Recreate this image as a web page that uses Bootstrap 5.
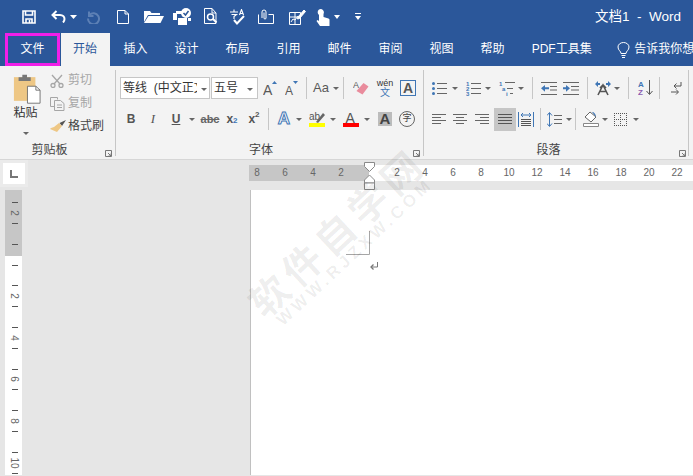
<!DOCTYPE html>
<html lang="zh">
<head>
<meta charset="utf-8">
<title>文档1 - Word</title>
<link rel="stylesheet" href="https://cdn.jsdelivr.net/npm/bootstrap@5.3.0/dist/css/bootstrap.min.css">
<style>
    html, body { margin: 0; height: 476px; overflow: hidden; }
    body { font-family: "Liberation Sans", "Noto Sans CJK SC", sans-serif; font-size: 12px; color: #444; }
    svg { display: block; flex: none; }

    .app { position: relative; width: 693px; height: 476px; overflow: hidden; background: #e6e6e6; }

    .title-bar { height: 33px; background: #2b579a; color: #fff; padding-left: 22px; }
    .qa { width: 14px; margin-right: 15px; }
    .doc-title { margin-left: auto; margin-right: 12px; font-size: 13.5px; line-height: 30px; white-space: pre; }
    .tab-bar { height: 33px; background: #2b579a; color: #fff; padding-left: 5px; white-space: nowrap; }
    .rtab { height: 33px; line-height: 33px; padding: 0 13.5px; flex: none; }
    .rtab-file { width: 55px; margin-right: 1px; padding: 0; text-align: center; line-height: 27px; border: 3px solid #f01fe8; }
    .rtab-on { background: #f3f3f3; color: #2b579a; width: 49px; padding-left: 12px; padding-right: 0; }
    .tell { padding-left: 12px; }

    .ribbon { height: 94px; background: #f3f3f3; border-bottom: 1px solid #d6d6d6; }
    .rgroup { position: relative; height: 94px; flex: none; }
    .rgroup::after { content: ""; position: absolute; right: 0; top: 4px; bottom: 4px; width: 1px; background: #c6c6c6; }
    .rbody { height: 75px; padding-top: 11px; }
    .rrow { height: 22px; margin-bottom: 9px; }
    .rlabel { height: 19px; line-height: 19px; text-align: center; color: #444; }
    .launch { position: absolute; right: 4px; bottom: 3px; }

    .paste { width: 50px; padding-left: 13px; }
    .paste-text { color: #333; line-height: 17px; width: 25px; text-align: center; margin-top: 1px; }
    .clip-item { height: 23px; line-height: 23px; width: 60px; color: #a6a6a6; }
    .clip-item.on { color: #444; }
    .clip-ic { width: 18px; }

    .combo { height: 22px; line-height: 20px; background: #fff; border: 1px solid #c6c6c6; color: #333; flex: none; padding-left: 2px; }
    .combo-font { width: 90px; margin-right: 1px; }
    .combo-size { width: 47px; }
    .combo-text { overflow: hidden; white-space: nowrap; flex: 1; }
    .combo-font .combo-text { margin-right: 2px; }

    .tb { width: 22px; height: 22px; flex: none; display: flex; align-items: center; justify-content: center; }
    .tb-s { width: 20px; }
    .tb-on { background: #c6c6c6; height: 23px; }
    .cr { width: 10px; height: 22px; flex: none; position: relative; }
    .cr::after { content: ""; position: absolute; left: 2px; top: 10px; border-style: solid; border-width: 3px 3px 0; border-color: #666 transparent transparent; }
    .vs { width: 1px; height: 22px; background: #c6c6c6; flex: none; }

    .left-rail { width: 28px; flex: none; }
    .corner { height: 27px; background: #ebebeb; padding: 3px; }
    .corner-in { width: 22px; height: 21px; background: #fff; padding: 7px 0 0 7px; }
    .vruler { margin: 3px 0 0 5px; }
    .main-col { margin-left: 221px; width: 444px; padding-top: 5px; flex: none; }
    .hruler { height: 16px; width: 444px; background: #fff; margin-bottom: 9px; font-size: 10px; line-height: 16px; color: #666; position: relative; }
    .hruler-gray { width: 120px; background: #c6c6c6; height: 16px; flex: none; }
    .hnum { width: 28px; text-align: center; flex: none; }
    .hnum-first { margin-left: -6px; }
    .indent { position: absolute; left: 115px; top: -3px; }
    .page { height: 285px; background: #fff; border-left: 1px solid #c0c0c0; margin-left: 1px; width: 443px; padding: 41px 0 0 95px; }
    .para-mark { margin: 7px 0 0 24px; }

    .wm { position: absolute; white-space: nowrap; pointer-events: none; color: rgba(0,0,0,.07); transform: translate(-50%, -50%) rotate(-43deg); line-height: 1; }
    .wm-main { left: 336px; top: 231px; font-family: "Noto Sans CJK SC", sans-serif; font-size: 39px; letter-spacing: 6px; font-weight: 700; }
    .wm-sub { left: 355px; top: 252px; font-family: "Liberation Sans", sans-serif; font-size: 17px; letter-spacing: 4px; font-weight: 700; }
</style>
</head>
<body>
<div class="app">

    <!-- 快速访问栏 -->
    <div class="title-bar d-flex align-items-center">
        <svg class="qa" width="14" height="14" viewBox="0 0 14 14" fill="none" stroke="#fff" stroke-width="1.6"><path d="M1 1h12v12H1z"/><path d="M3.5 1v4h7V1M4 13V9h6v4"/><path d="M7.5 10v3" stroke-width="1.5"/></svg>
        <svg width="16" height="13" viewBox="0 0 16 13" fill="none" stroke="#fff" stroke-width="2" style="margin-right:3px"><path d="M5.5 1 1.5 5l4 4"/><path d="M2 5h7c3 0 4.5 2 4.5 4 0 1.500-.5 2.500-1.500 3.500"/></svg>
        <svg width="7" height="4" viewBox="0 0 7 4" fill="#fff" style="margin-right:9px"><path d="M0 0h7L3.500 4z"/></svg>
        <svg width="14" height="14" viewBox="0 0 14 14" fill="none" stroke="#5d80b5" stroke-width="2" style="margin-right:17px"><path d="M3 1.500V6h4.500"/><path d="M3.500 5A5.500 5.500 0 1 1 2 8.500"/></svg>
        <svg width="12" height="14" viewBox="0 0 12 14" fill="none" stroke="#fff" style="margin-right:15px"><path d="M.5.500h7.500l3.500 3.500v9.500H.5z"/><path d="M8 .5V4h3.500"/></svg>
        <svg width="20" height="13" viewBox="0 0 20 13" fill="#fff" style="margin-right:9px"><path d="M0 1h6l1.500 2H16v2H4L0 12z"/><path d="M4.500 6H20l-3.500 7H0z"/></svg>
        <svg width="19" height="17" viewBox="0 0 19 17" fill="#fff" style="margin-right:11px"><path d="M0 5h4v7H0zM5 10h9v7H5z"/><path d="M3 3h7v3H3z"/><circle cx="13" cy="5" r="5"/><path d="m10.500 5 2 2 3-4" fill="none" stroke="#2b579a" stroke-width="1.500"/><path d="M15 10h3v3h-3z"/></svg>
        <svg width="16" height="17" viewBox="0 0 16 17" fill="none" stroke="#fff" style="margin-right:10px"><path d="M9 .5H1.500v15H13V5zM9 .5V5h4"/><circle cx="7.500" cy="9" r="3" stroke-width="1.500"/><path d="m10 11 3.500 3.500" stroke-width="2"/></svg>
        <svg width="16" height="16" viewBox="0 0 16 16" fill="none" stroke="#fff" style="margin-right:13px"><path d="M1 3h8M5 .5V3M2.500 5.500h5L5 7.500v2.500" stroke-width="1.100"/><path d="M10.500 6l2-5.500 2 5.500M11.300 4.500h2.500" stroke-width="1.100"/><path d="m5 11 3 3.500 7-7.500" stroke-width="2"/></svg>
        <svg width="16" height="15" viewBox="0 0 16 15" fill="none" stroke="#fff" style="margin-right:15px"><path d="M.5 5.500v9h15v-9h-5"/><path d="M4 9V3a2 2 0 0 1 4 0v6a1 1 0 0 1-2 0V3.500"/></svg>
        <svg width="17" height="16" viewBox="0 0 17 16" fill="none" stroke="#fff" style="margin-right:9px"><path d="M.5 3.500h11v12H.5zM.5 8h11M6 3.500v12"/><path d="M2 13l2-3 2 1 3-4"/><path d="m9 8 6-7 1.500 1.500-6 7-2 .5z" fill="#fff"/></svg>
        <svg width="17" height="18" viewBox="0 0 17 18" fill="#fff" style="margin-right:3px;margin-left:-1px"><path d="M5 1.500a3.500 3.500 0 0 1 4.500 5V9l5 1.500c1 .5 1 1 1 2V18H6l-3.500-5 1-1L5 13V7A3.500 3.500 0 0 1 5 1.500z"/></svg>
        <svg width="6" height="4" viewBox="0 0 6 4" fill="#fff" style="margin-right:15px"><path d="M0 0h6L3 4z"/></svg>
        <svg width="6" height="7" viewBox="0 0 6 7" fill="#fff"><path d="M0 0h6v1H0zM0 3h6L3 7z"/></svg>
        <div class="doc-title">文档1  -  Word</div>
    </div>

    <!-- 选项卡 -->
    <div class="tab-bar d-flex">
        <div class="rtab rtab-file">文件</div>
        <div class="rtab rtab-on">开始</div>
        <div class="rtab">插入</div>
        <div class="rtab">设计</div>
        <div class="rtab">布局</div>
        <div class="rtab">引用</div>
        <div class="rtab">邮件</div>
        <div class="rtab">审阅</div>
        <div class="rtab">视图</div>
        <div class="rtab">帮助</div>
        <div class="rtab">PDF工具集</div>
        <div class="rtab tell d-flex align-items-center gap-1">
            <svg width="13" height="16" viewBox="0 0 13 16" fill="none" stroke="#fff"><path d="M4 11.500C4 9 1 8.500 1 5a5.500 4.500 0 0 1 11 0c0 3.500-3 4-3 6.500z"/><path d="M4.500 13.500h4M5 15.500h3"/></svg>
            <span>告诉我你想</span>
        </div>
    </div>

    <!-- 功能区 -->
    <div class="ribbon d-flex">

        <div class="rgroup" style="width:116px">
            <div class="d-flex" style="height:75px">
                <div class="paste">
                    <svg width="28" height="30" viewBox="0 0 30 38" preserveAspectRatio="none" style="margin-top:8px">
                        <rect x="1" y="4" width="23" height="30" fill="#eec785"/>
                        <path d="M6 4h13v5H6zM10 1h5v3h-5z" fill="#777"/>
                        <path d="M15.500 15.500h9l4.500 5v16.500H15.500z" fill="#fff" stroke="#666"/>
                        <path d="M24.500 15.500v5H29" fill="none" stroke="#666"/>
                    </svg>
                    <div class="paste-text">粘贴</div>
                    <div class="cr" style="margin-left:8px;height:10px"></div>
                </div>
                <div style="padding-top:3px">
                    <div class="clip-item d-flex align-items-center">
                        <div class="clip-ic"><svg width="14" height="14" viewBox="0 0 14 14" fill="none" stroke="#a6a6a6" stroke-width="1.300"><path d="M2 1l8 9M12 1 4 10"/><circle cx="3" cy="11.500" r="2"/><circle cx="11" cy="11.500" r="2"/></svg></div>剪切
                    </div>
                    <div class="clip-item d-flex align-items-center">
                        <div class="clip-ic"><svg width="15" height="14" viewBox="0 0 15 14" fill="none" stroke="#a6a6a6"><path d="M.5.500h7v2M.5.500v9h4"/><path d="M4.500 3.500h6l3.500 3v7H4.500zM7 8h5M7 10.500h5"/></svg></div>复制
                    </div>
                    <div class="clip-item on d-flex align-items-center">
                        <div class="clip-ic"><svg width="16" height="14" viewBox="0 0 16 14"><path d="M9.500 3 16 0l-4 6z" fill="#555"/><path d="M9 3l3 3-5 6-7-3 1-1 3-1z" fill="#eec785"/></svg></div>格式刷
                    </div>
                </div>
            </div>
            <div class="rlabel" style="padding-right:17px">剪贴板</div>
            <svg class="launch" width="7" height="7" viewBox="0 0 7 7" fill="none" stroke="#777"><path d="M.5 6.500v-6h6v6zM3 3l3 3M6 3.500V6H3.500"/></svg>
        </div>

        <div class="rgroup" style="width:308px">
            <div class="rbody" style="padding-left:4px">
                <div class="rrow d-flex">
                    <div class="combo combo-font d-flex"><div class="combo-text">等线&nbsp; (中文正文)</div><div class="cr"></div></div>
                    <div class="combo combo-size d-flex" style="margin-right:1px"><div class="combo-text">五号</div><div class="cr" style="margin-right:2px"></div></div>
                    <div class="tb"><svg width="15" height="15" viewBox="0 0 15 15"><text x="0" y="14" font-size="14" fill="#595959" font-family="Liberation Sans">A</text><path d="M9 3l2.500-3L14 3z" fill="#3f76b5"/></svg></div>
                    <div class="tb"><svg width="14" height="15" viewBox="0 0 14 15"><text x="0" y="14" font-size="12" fill="#595959" font-family="Liberation Sans">A</text><path d="M8 0h5l-2.500 3z" fill="#3f76b5"/></svg></div>
                    <div class="vs" style="margin:0 4px 0 3px"></div>
                    <div class="tb" style="width:20px;font-size:13px;color:#595959;font-family:'Liberation Sans'">Aa</div>
                    <div class="cr"></div>
                    <div class="vs" style="margin:0 6px 0 2px"></div>
                    <div class="tb"><svg width="16" height="16" viewBox="0 0 16 16"><text x="0" y="8" font-size="9" fill="#595959" font-family="Liberation Sans">A</text><path d="M10.500 3l5 3.500-6 8-6-3.500z" fill="#e98b9c"/></svg></div>
                    <div class="tb d-block text-center" style="margin-left:2px;line-height:9px;font-size:9px;padding-top:2px;color:#333">wén<br><span style="color:#3f76b5;font-size:10px">文</span></div>
                    <div class="tb" style="margin-left:1px"><div class="d-flex align-items-center justify-content-center" style="width:16px;height:16px;border:1px solid #3f76b5;font-size:14px;font-weight:700;color:#555">A</div></div>
                </div>
                <div class="rrow d-flex align-items-center">
                    <div class="tb fw-bold" style="font-family:'Liberation Sans';color:#555">B</div>
                    <div class="tb" style="font-family:'Liberation Serif';font-style:italic;color:#555;font-size:13px">I</div>
                    <div class="tb" style="margin-left:1px;font-family:'Liberation Sans';color:#555;font-weight:700;text-decoration:underline">U</div>
                    <div class="cr"></div>
                    <div class="tb" style="margin-left:2px;font-family:'Liberation Sans';color:#666;text-decoration:line-through;font-size:11px;font-weight:700">abc</div>
                    <div class="tb" style="font-family:'Liberation Sans';color:#555;font-weight:700">x<sub style="font-size:8px;color:#3f76b5">2</sub></div>
                    <div class="tb" style="font-family:'Liberation Sans';color:#555;font-weight:700">x<sup style="font-size:8px;color:#555">2</sup></div>
                    <div class="vs" style="margin:0 5px 0 3px"></div>
                    <div class="tb tb-s" style="font-family:'Liberation Sans';font-size:17px;font-weight:700;color:#fff;-webkit-text-stroke:1px #3f76b5;">A</div>
                    <div class="cr"></div>
                    <div class="tb" style="margin-left:2px"><svg width="16" height="16" viewBox="0 0 16 16"><text x="0" y="9" font-size="10" fill="#555" font-family="Liberation Sans">ab</text><path d="M7 11l7-9 2 2-7 8z" fill="#666"/><rect y="12" width="16" height="4" fill="#ffff00"/></svg></div>
                    <div class="cr"></div>
                    <div class="tb" style="margin-left:2px"><svg width="16" height="16" viewBox="0 0 16 16"><text x="2.500" y="12" font-size="14" fill="#555" font-family="Liberation Sans">A</text><rect y="12" width="16" height="4" fill="#ff0000"/></svg></div>
                    <div class="cr"></div>
                    <div class="tb" style="margin-left:2px"><div class="d-flex align-items-center justify-content-center" style="width:14px;height:14px;background:#bcbcbc;font-size:15px;font-weight:700;color:#444">A</div></div>
                    <div class="tb"><div class="d-flex align-items-center justify-content-center rounded-circle" style="width:16px;height:16px;border:1px solid #666;font-size:9px;color:#444">字</div></div>
                </div>
            </div>
            <div class="rlabel" style="padding-right:18px">字体</div>
            <svg class="launch" width="7" height="7" viewBox="0 0 7 7" fill="none" stroke="#777"><path d="M.5 6.500v-6h6v6zM3 3l3 3M6 3.500V6H3.500"/></svg>
        </div>

        <div class="rgroup" style="width:265px">
            <div class="rbody" style="padding-left:4px">
                <div class="rrow d-flex align-items-center">
                    <div class="tb"><svg width="15" height="13" viewBox="0 0 15 13"><g fill="#3f76b5"><circle cx="1.500" cy="1.500" r="1.500"/><circle cx="1.500" cy="6.500" r="1.500"/><circle cx="1.500" cy="11.500" r="1.500"/></g><path d="M5 1.500h10M5 6.500h10M5 11.500h10" stroke="#666"/></svg></div>
                    <div class="cr" style="margin-right:4px"></div>
                    <div class="tb" style="width:19px"><svg width="15" height="15" viewBox="0 0 15 15"><g fill="#3f76b5" font-size="6" font-family="Liberation Sans" font-weight="700"><text x="0" y="5">1</text><text x="0" y="10">2</text><text x="0" y="15">3</text></g><path d="M5 2.500h10M5 7.500h10M5 12.500h10" stroke="#666"/></svg></div>
                    <div class="cr" style="margin-right:4px"></div>
                    <div class="tb" style="width:19px"><svg width="16" height="15" viewBox="0 0 16 15"><g fill="#3f76b5" font-size="6" font-family="Liberation Sans" font-weight="700"><text x="0" y="5">1</text><text x="3" y="10">a</text><text x="7" y="15">i</text></g><path d="M6 1.500h10M8 7.500h6M11 12.500h3" stroke="#666"/></svg></div>
                    <div class="cr"></div>
                    <div class="vs" style="margin:0 7px 0 6px"></div>
                    <div class="tb" style="width:18px"><svg width="16" height="13" viewBox="0 0 16 13"><path d="M0 .5h16M9 4.500h7M9 8h7M0 12.500h16" stroke="#666"/><path d="M0 6.300 4 3v2.300h4v2H4v2.400z" fill="#3f76b5"/></svg></div>
                    <div class="tb" style="margin-left:2px"><svg width="16" height="13" viewBox="0 0 16 13"><path d="M0 .5h16M8 4.500h8M8 8h8M0 12.500h16" stroke="#666"/><path d="M7 6.300 3 3v2.300H0v2h3v2.400z" fill="#3f76b5"/></svg></div>
                    <div class="vs" style="margin:0 7px 0 5px"></div>
                    <div class="tb" style="width:16px"><svg width="16" height="15" viewBox="0 0 16 15"><path d="M5 7l3-3 3 3M3 14l5-10 5 10M5 10.500h6" fill="none" stroke="#555" stroke-width="1.600"/><path d="M0 3l3-3v2h2v2H3v2zM16 3l-3-3v2h-2v2h2v2z" fill="#3f76b5"/></svg></div>
                    <div class="cr" style="margin-left:1px"></div>
                    <div class="vs" style="margin:0 8px 0 6px"></div>
                    <div class="tb" style="width:17px"><svg width="15" height="16" viewBox="0 0 15 16"><text x="0" y="7" font-size="8" font-weight="700" fill="#3f76b5" font-family="Liberation Sans">A</text><text x="0" y="15" font-size="8" font-weight="700" fill="#8c5cb0" font-family="Liberation Sans">Z</text><path d="M11.500 0v14M8.500 11l3 3.500 3-3.500" fill="none" stroke="#555"/></svg></div>
                    <div class="vs" style="margin:0 10px 0 5px"></div>
                    <div class="tb" style="width:12px"><svg width="11" height="13" viewBox="0 0 11 13" fill="none" stroke="#555"><path d="M10 0v4H3M5.500 1.500 3 4l2.500 2.500M0 10h7M5 7.500 7.500 10 5 12.500"/></svg></div>
                </div>
                <div class="rrow d-flex align-items-center">
                    <div class="tb" style="width:21px"><svg width="14" height="10" viewBox="0 0 14 10"><path d="M0 .5h14M0 3.500h9M0 6.500h14M0 9.500h9" stroke="#666"/></svg></div>
                    <div class="tb"><svg width="14" height="10" viewBox="0 0 14 10"><path d="M0 .5h14M3 3.500h8M0 6.500h14M3 9.500h8" stroke="#666"/></svg></div>
                    <div class="tb" style="margin-right:1px"><svg width="14" height="10" viewBox="0 0 14 10"><path d="M0 .5h14M5 3.500h9M0 6.500h14M5 9.500h9" stroke="#666"/></svg></div>
                    <div class="tb tb-on"><svg width="14" height="10" viewBox="0 0 14 10"><path d="M0 .5h14M0 3.500h14M0 6.500h14M0 9.500h14" stroke="#555"/></svg></div>
                    <div class="tb" style="width:20px"><svg width="16" height="15" viewBox="0 0 16 15" fill="none"><path d="M.5 0v15M15.500 0v15" stroke="#3f76b5"/><path d="M3 3h10M5 1 3 3l2 2M11 1l2 2-2 2" stroke="#3f76b5"/><path d="M3 7.500h10M3 9.500h10M3 11.500h10M3 13.500h10" stroke="#555"/></svg></div>
                    <div class="vs" style="margin:0 5px 0 4px"></div>
                    <div class="tb" style="width:16px"><svg width="15" height="15" viewBox="0 0 15 15" fill="none"><path d="M2.500 1v13M0 3.500l2.500-3 2.500 3M0 11.500l2.500 3 2.500-3" stroke="#3f76b5"/><path d="M7 3.500h8M7 7.500h8M7 11.500h8" stroke="#666"/></svg></div>
                    <div class="cr" style="margin-left:2px"></div>
                    <div class="vs" style="margin:0 6px 0 1px"></div>
                    <div class="tb" style="width:17px"><svg width="16" height="16" viewBox="0 0 16 16"><path d="M7 1l6 5-5 5-6-5z" fill="#fff" stroke="#666"/><path d="M9 1c2 0 4 2 4 5z" fill="#3f76b5"/><path d="M.5 12.500h15v3H.5z" fill="#fff" stroke="#888"/></svg></div>
                    <div class="cr" style="margin-left:1px"></div>
                    <div class="tb" style="width:18px;margin-left:1px"><svg width="13" height="13" viewBox="0 0 13 13" fill="none" stroke="#555" stroke-dasharray="1 1" shape-rendering="crispEdges"><path d="M0 .5h13M0 6.500h13M0 12.500h13M.5 0v13M6.500 0v13M12.500 0v13"/></svg></div>
                    <div class="cr" style="margin-left:2px"></div>
                </div>
            </div>
            <div class="rlabel" style="padding-right:16px">段落</div>
            <svg class="launch" style="right:3px" width="7" height="7" viewBox="0 0 7 7" fill="none" stroke="#777"><path d="M.5 6.500v-6h6v6zM3 3l3 3M6 3.500V6H3.500"/></svg>
        </div>
    </div>

    <!-- 文档区 -->
    <div class="d-flex">
        <div class="left-rail">
            <div class="corner">
                <div class="corner-in"><svg width="8" height="8" viewBox="0 0 8 8" fill="none" stroke="#777" stroke-width="2"><path d="M1 0v7h7"/></svg></div>
            </div>
            <svg class="vruler" width="17" height="285" viewBox="0 0 17 285">
                <rect width="17" height="285" fill="#fff"/>
                <rect width="17" height="66" fill="#c6c6c6"/>
                <path d="M7 12.500h6M7 33.500h6M7 54.500h6M7 75.500h6M7 95.500h6M7 116.500h6M7 137.500h6M7 158.500h6M7 179.500h6M7 199.500h6M7 220.500h6M7 241.500h6M7 262.500h6M7 283.500h6" stroke="#555"/>
                <g font-size="10" fill="#666" text-anchor="middle" font-family="Liberation Sans">
                    <text transform="translate(6 23) rotate(90)">2</text>
                    <text transform="translate(6 106) rotate(90)">2</text>
                    <text transform="translate(6 148) rotate(90)">4</text>
                    <text transform="translate(6 189) rotate(90)">6</text>
                    <text transform="translate(6 231) rotate(90)">8</text>
                    <text transform="translate(6 273) rotate(90)">10</text>
                </g>
            </svg>
        </div>
        <div class="main-col">
            <div class="hruler d-flex">
                <div class="hruler-gray d-flex">
                    <div class="hnum hnum-first">8</div><div class="hnum">6</div><div class="hnum">4</div><div class="hnum">2</div>
                </div>
                <div class="hnum" style="margin-left:14px">2</div><div class="hnum">4</div><div class="hnum">6</div><div class="hnum">8</div><div class="hnum">10</div><div class="hnum">12</div><div class="hnum">14</div><div class="hnum">16</div><div class="hnum">18</div><div class="hnum">20</div><div class="hnum">22</div>
                <svg class="indent" width="11" height="28" viewBox="0 0 11 28" fill="#fff" stroke="#8a8a8a"><path d="M.5.500h10v4l-5 5-5-5z"/><path d="M5.500 13l5 5v3H.5v-3z"/><path d="M.5 21h10v6.500H.5z"/></svg>
            </div>
            <div class="page">
                <svg width="24" height="24" viewBox="0 0 24 24" fill="none" stroke="#a6a6a6"><path d="M23.500 0v23.500H0"/></svg>
                <svg class="para-mark" width="8" height="9" viewBox="0 0 8 9" fill="none" stroke="#777"><path d="M7.500 0v5H1.500"/><path d="M3.500 2.500 1 5l2.500 2.500" stroke-width="1.300"/></svg>
            </div>
        </div>
    </div>

    <!-- 水印 -->
    <div class="wm wm-main">软件自学网</div>
    <div class="wm wm-sub">WWW.RJZXW.COM</div>
</div>
<script src="https://cdn.jsdelivr.net/npm/bootstrap@5.3.0/dist/js/bootstrap.bundle.min.js"></script>
</body>
</html>
